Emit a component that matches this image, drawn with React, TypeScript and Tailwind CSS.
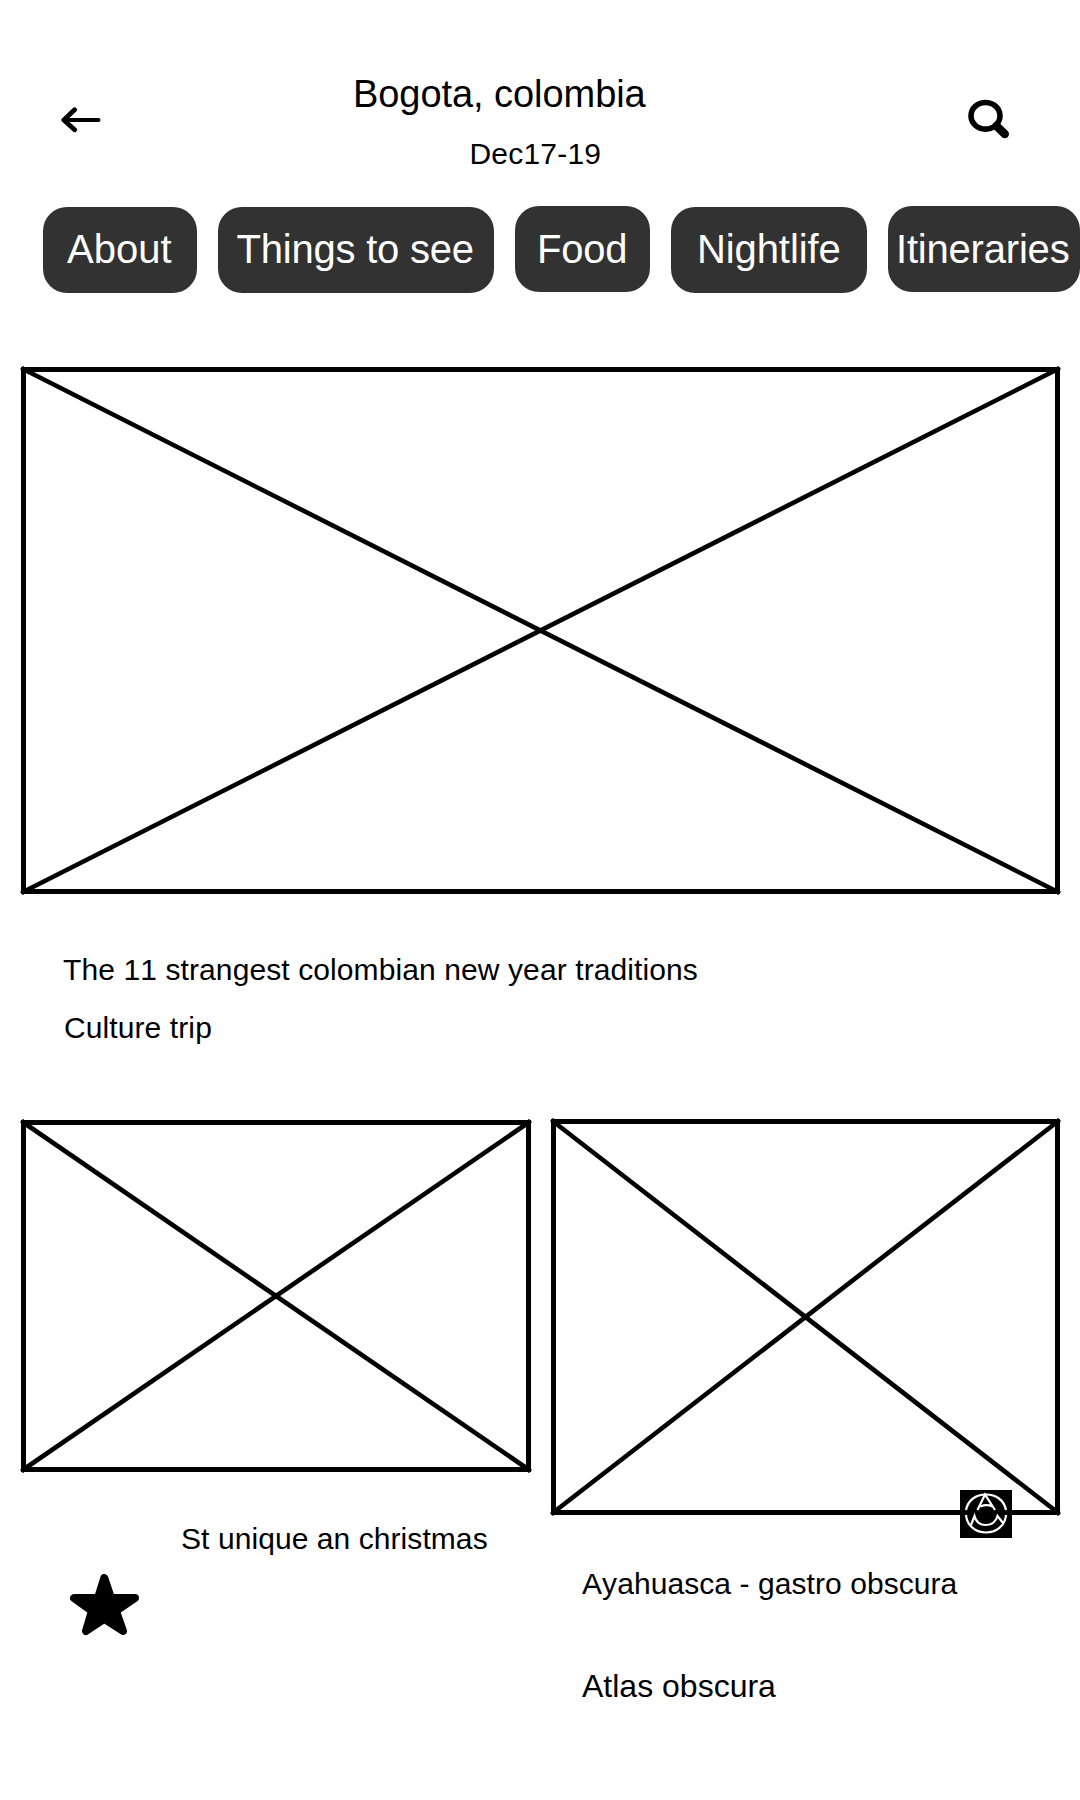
import React from "react";

const tabs = [
  { label: "About", box: "w-[154px] mt-px pl-[24px] pb-[2px]" },
  { label: "Things to see", box: "w-[276px] mt-px pl-[18.5px] pb-[2px] tracking-[-0.22px]" },
  { label: "Food", box: "w-[135px] pl-[22px] py-px tracking-[-0.2px]" },
  { label: "Nightlife", box: "w-[196px] mt-px pl-[26px] pb-[2px] tracking-[-0.1px]" },
  { label: "Itineraries", box: "w-[192px] pl-[8px] py-px tracking-[-0.2px]" },
];

function Placeholder({ width, height, className }: { width: number; height: number; className: string }) {
  const r = width - 2.5;
  const b = height - 2.5;
  return (
    <svg
      className={`block shrink-0 overflow-visible ${className}`}
      width={width}
      height={height}
      fill="none"
      stroke="#000"
      strokeWidth="5"
    >
      <rect x="2.5" y="2.5" width={width - 5} height={height - 5} />
      <path strokeWidth="4.6" d={`M1 1.5L${r + 1.5} ${b + 1}M${r + 1.5} 1.5L1 ${b + 1}`} />
      <path
        strokeWidth="1.2"
        d={`M2 -1V3M-1 2H3M${r + 0.5} -1V3M${r} 2H${width + 1}M2 ${b}V${height + 1}M-1 ${b + 0.5}H3M${r + 0.5} ${b}V${height + 1}M${r} ${b + 0.5}H${width + 1}`}
      />
    </svg>
  );
}

function BackIcon() {
  return (
    <svg className="mt-[47px] ml-[60px] block shrink-0" width="41" height="26" fill="none" stroke="#000">
      <path d="M4 13H38.5" strokeWidth="4" strokeLinecap="round" />
      <path d="M14.6 2.8L3.8 13L14.6 22.8" strokeWidth="4.8" strokeLinecap="round" strokeLinejoin="round" />
    </svg>
  );
}

function SearchIcon() {
  return (
    <svg className="mt-[39px] mr-[70px] block shrink-0" width="42" height="40" fill="none" stroke="#000">
      <ellipse cx="17.5" cy="16.8" rx="14.5" ry="13.3" strokeWidth="5.6" />
      <path d="M28.5 27L36.8 35" strokeWidth="8.4" strokeLinecap="round" />
    </svg>
  );
}

function AtlasBadge() {
  return (
    <svg className="absolute top-[371px] left-[409px]" width="52" height="48" fill="none" stroke="#fff" strokeWidth="2.2">
      <rect width="52" height="48" fill="#000" stroke="none" />
      <path d="M6 20C8 10 16 4.5 26 4.5C36 4.5 44 10 46 20" />
      <path d="M6 25C7 36 16 42.5 26 42.5C36 42.5 45 36 46 25" />
      <path d="M17.5 20L25 4.5L35 20M20.5 16.5C24 15 29 15 32.5 16.5" />
      <path d="M11 35L14.5 26C16 32 20 35 25.7 35C31 35 36 32 37.5 26L43 33" />
    </svg>
  );
}

function StarIcon() {
  return (
    <svg className="mt-[15px] ml-[70px] block" width="70" height="62" fill="#000" stroke="#000" strokeWidth="8" strokeLinejoin="round">
      <path d="M34.3 4L41 24H65L46 37L53 57L34.3 45L16 57L22 37L4 24H28Z" />
    </svg>
  );
}

export default function App() {
  return (
    <main className="flex h-[1800px] w-[1080px] flex-col overflow-hidden bg-white font-['Liberation_Sans',Arial,sans-serif] text-[30px] leading-[40px] whitespace-nowrap text-black [font-kerning:none]">
      <header className="mt-[60px] flex h-[146px]">
        <BackIcon />
        <div className="flex flex-1 flex-col">
          <h1 className="mt-[10px] h-[46px] pl-[252px] text-[38px] leading-[48px] tracking-[-0.06px]">Bogota, colombia</h1>
          <p className="mt-[18px] pl-[368.5px] tracking-[0.2px]">Dec17-19</p>
        </div>
        <SearchIcon />
      </header>

      <nav className="flex items-start gap-[21px] pl-[43px] text-[40px] leading-[84px] text-white">
        {tabs.map((tab) => (
          <button key={tab.label} className={`h-[86px] shrink-0 rounded-[24px] bg-[#323232] text-left ${tab.box}`}>
            {tab.label}
          </button>
        ))}
      </nav>

      <article className="mt-[74px] h-[752px]">
        <Placeholder width={1039} height={527} className="ml-[21px]" />
        <h2 className="mt-[56px] pl-[63px] tracking-[0.1px]">The 11 strangest colombian new year traditions</h2>
        <p className="mt-[18px] pl-[64px] tracking-[0.1px]">Culture trip</p>
      </article>

      <section className="flex">
        <article className="w-[551px]">
          <Placeholder width={510} height={352} className="mt-px ml-[21px]" />
          <h2 className="mt-[47px] pl-[181px] tracking-[0.07px]">St unique an christmas</h2>
          <StarIcon />
        </article>
        <article className="relative w-[529px]">
          <Placeholder width={509} height={396} className="" />
          <AtlasBadge />
          <h2 className="mt-[49px] pl-[31px] tracking-[0.07px]">Ayahuasca - gastro obscura</h2>
          <p className="mt-[62px] pl-[31px] text-[32px]">Atlas obscura</p>
        </article>
      </section>
    </main>
  );
}
